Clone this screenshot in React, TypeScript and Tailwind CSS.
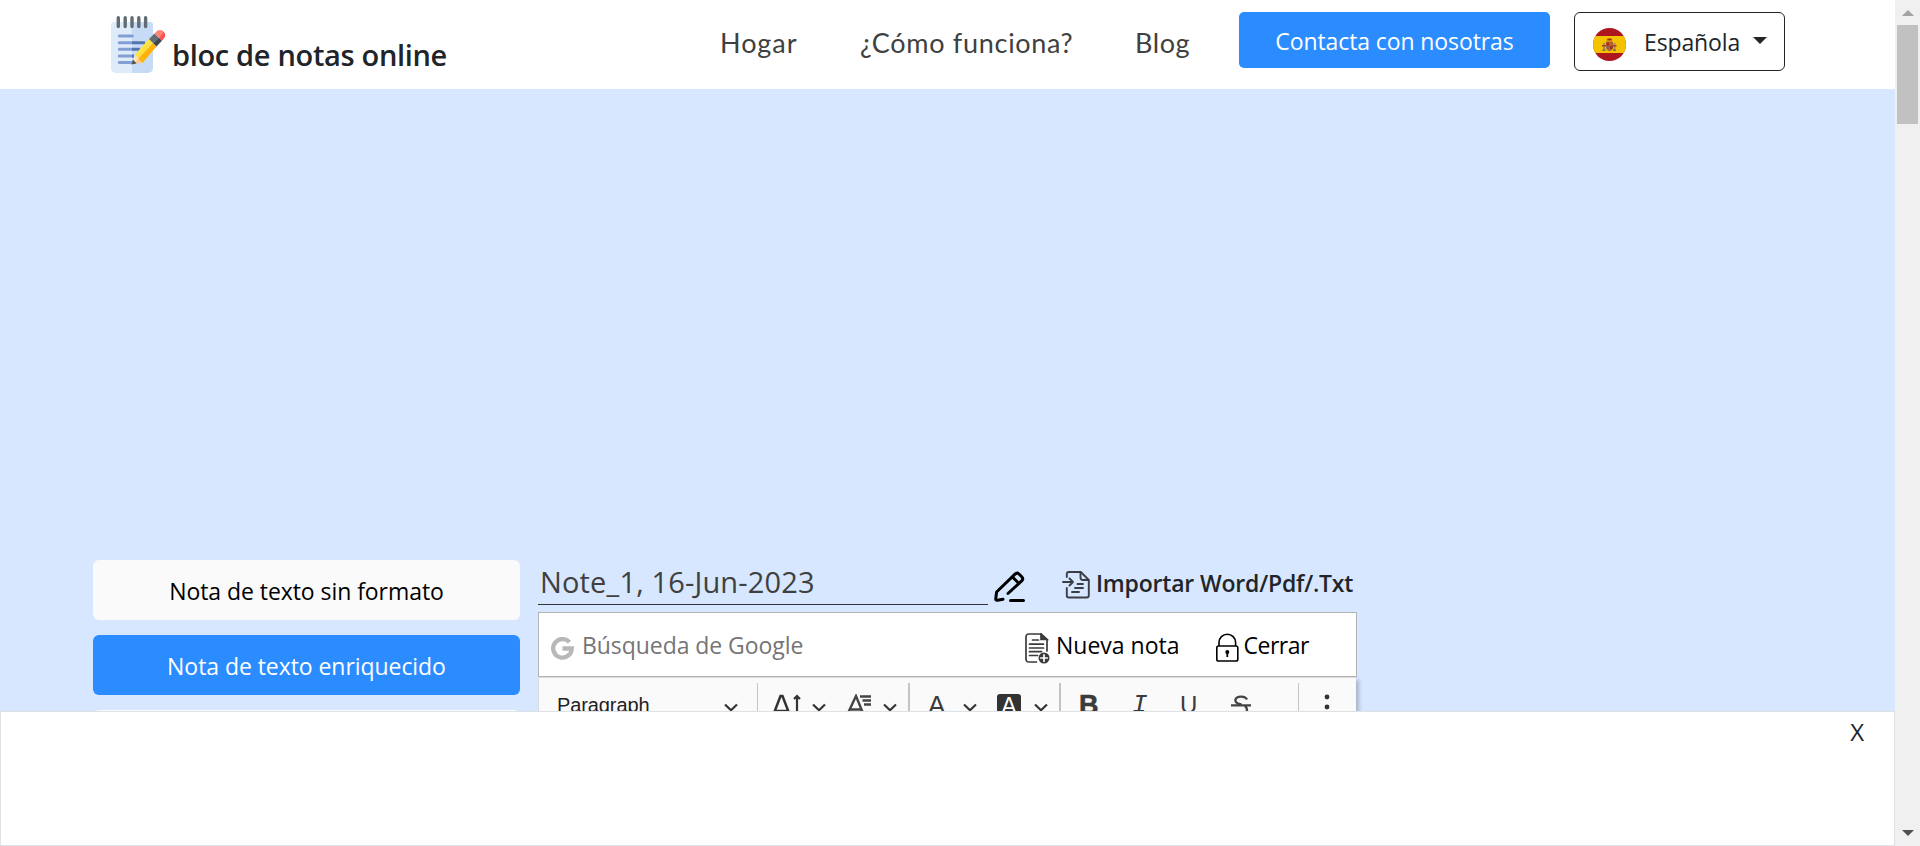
import type { ReactNode } from "react";

function NotepadLogo() {
  return (
    <svg className="mt-4 h-[57px] w-[55px] shrink-0" viewBox="0 0 55 57">
      <path d="M0 9a3 3 0 0 1 3-3h18v51H5a5 5 0 0 1-5-5z" fill="#deebf9" />
      <path d="M21 6h18a3 3 0 0 1 3 3v43a5 5 0 0 1-5 5H21z" fill="#c6dcf6" />
      <g stroke="#626d73" strokeWidth="3.4" strokeLinecap="round">
        <path d="M7.3 1.8v8.7M14.2 1.8v8.7M21 1.8v8.7M27.8 1.8v8.7M34.6 1.8v8.7" />
      </g>
      <g strokeWidth="3" strokeLinecap="round">
        <path d="M8.3 20h13M8.3 26.7H21M8.3 33.3H21M8.3 40H21M8.3 46.6H21" stroke="#829fd5" />
        <path d="M21 26.7h13M21 33.3h8M21 40h2" stroke="#5474ad" strokeLinecap="butt" />
      </g>
      <path d="M21.5 48.5 24 38.5l7 7.5z" fill="#ffe3b8" />
      <path d="m21.5 48.5 6-6 4 4z" fill="#ffc98e" />
      <path d="M20.5 48.5 22 43.5l3.5 4z" fill="#4b5760" />
      <path d="m24 38.5 14-15.5 4 4-14.5 15.5z" fill="#ffe13d" />
      <path d="m27.5 42.5 14.5-15.5 3.5 3.5L31.5 47z" fill="#ffb20a" />
      <path d="m38 23 5.5-5.5 4.5 4.3-6 5.2z" fill="#626d73" />
      <path d="m42 27 6-5.2 3 3-5.500 5.700z" fill="#3f484f" />
      <path d="m43.500 17.500 2-2a5 5 0 0 1 7 0L48 21.800z" fill="#ff8375" />
      <path d="M48 21.800l4.500-6.300a5 5 0 0 1 0 7.500L51 24.800z" fill="#ff5250" />
    </svg>
  );
}

function SpanishFlag() {
  return (
    <svg className="mt-[15px] size-[33px] shrink-0" viewBox="0 0 33 33">
      <clipPath id="disc">
        <circle cx="16.5" cy="16.5" r="16.5" />
      </clipPath>
      <g clipPath="url(#disc)">
        <path fill="#ac161c" d="M0 0h33v33H0z" />
        <path fill="#f3c300" d="M0 8h33v17H0z" />
        <path fill="#b08a4a" d="M10 15h2v8h-2zM20.5 15h2v8h-2z" />
        <path fill="#b5622b" d="M13 13.500h7V20q-1 3-3.500 3.500Q14 23 13 20z" />
        <path fill="#a92a1f" d="M13.500 14.500h2.500v3h-2.500zM17 18h2.500v3H17zM14.500 10.500h4l.5 2h-5z" />
        <path fill="#7c6a62" d="M13.500 18h2.500v3h-2.500zM9.500 21.500h3v1.500h-3zM20 21.500h3v1.500h-3z" />
        <path fill="#a5432d" d="M9 17h4v1.500H9zM19.500 17h4v1.500h-4z" />
      </g>
    </svg>
  );
}

function PencilIcon() {
  return (
    <svg className="mt-[11px] ml-[6px] h-[32px] w-[31px] shrink-0" viewBox="0 0 31 32" fill="none" stroke="#000" strokeWidth="3" strokeLinejoin="round" strokeLinecap="round">
      <path d="M9 28.300 3.500 29.300q-2 .3-1.700-1.800l.8-6.500L21 3.200q2-2 4-.2l2.700 2.700q2 2 .2 4L14 22.500M18.500 6l6.500 6.500" />
      <path d="M16.500 29.500h13" />
    </svg>
  );
}

function ImportIcon() {
  return (
    <svg className="mt-[11px] ml-[37px] h-[28px] w-[28px] shrink-0" viewBox="0 0 28 28" fill="none" stroke="#3a3f45" strokeWidth="1.9" strokeLinecap="round" strokeLinejoin="round">
      <path d="M4.800 6V3q0-2 2-2h12l8 8v15.500q0 2-2 2H6.800q-2 0-2-2V17" />
      <path d="M18.500 1.500v5q0 2.500 2.500 2.500h5.500M1 11h9.500M7.500 7.500 11 11l-3.500 3.500M15.500 13h5.500M13 17h8M10 21h7" />
    </svg>
  );
}

function NewNoteIcon() {
  return (
    <svg className="mt-[20px] h-[31px] w-[25px] shrink-0" viewBox="0 0 25 31" fill="none" stroke="#3b3b3b" strokeWidth="1.7" strokeLinecap="round">
      <path d="M11.500 29H4q-3 0-3-3V4q0-3 3-3h12l6 5.500V18" />
      <path d="M16 1v5.500h6z" fill="#3b3b3b" />
      <path d="M7.500 7h6M4.500 11.200h14M4.500 15h14M4.500 18.700h12M4.500 22.500h8" />
      <circle cx="19" cy="25" r="5.5" fill="#3b3b3b" stroke="none" />
      <path d="M19 21.800v6.400M15.800 25h6.400" stroke="#fff" />
    </svg>
  );
}

function LockIcon() {
  return (
    <svg className="mt-[20px] ml-[35px] h-[30px] w-[24px] shrink-0" viewBox="0 0 24 30" fill="none" stroke="#000" strokeWidth="1.6">
      <rect x="1.8" y="13" width="21" height="15" rx="1.8" />
      <path d="M4 13V9.500a8.300 8.300 0 0 1 16.600 0V13" />
      <circle cx="12.3" cy="19" r="2" fill="#000" stroke="none" />
      <path d="M12.300 19v5" strokeWidth="1.8" />
    </svg>
  );
}

function GoogleIcon() {
  return (
    <svg className="mt-[24px] ml-[12px] size-[23px] shrink-0" viewBox="0 0 23 23" fill="none" stroke="#b8b8b8" strokeWidth="4.3">
      <path d="M18.500 5.200A9.300 9.300 0 1 0 20.800 11.500H11.500" />
    </svg>
  );
}

function Tool({ className, children }: { className: string; children: ReactNode }) {
  return <div className={`flex h-[50px] shrink-0 items-start ${className}`}>{children}</div>;
}

function Chevron() {
  return (
    <svg className="mt-[25px] h-[9px] w-[14px] shrink-0" viewBox="0 0 14 9" fill="none" stroke="#333" strokeWidth="2.2">
      <path d="m1 1.500 6 5.700 6-5.700" />
    </svg>
  );
}

function Glyph({ className, children }: { className: string; children: ReactNode }) {
  return <span className={`block leading-[30px] text-[#3b3b3b] ${className}`}>{children}</span>;
}

function Toolbar() {
  return (
    <div className="mr-px flex h-[60px] border-t border-l border-[#dcdcdc] bg-[#fafafa] font-['Liberation_Sans',sans-serif] shadow-[3px_3px_4px_rgba(0,0,0,0.22)]">
      <Tool className="w-[218px] pl-[18px]">
        <span className="mt-[12px] w-[167px] shrink-0 text-[20px] leading-[30px] tracking-[-0.1px] text-[#222]">Paragraph</span>
        <Chevron />
      </Tool>
      <i className="mt-[5px] h-[60px] w-px bg-[#c4c4c4]" />
      <Tool className="w-[150px] pl-[15px]">
        <svg className="mt-[16px] h-[22px] w-[18px]" viewBox="0 0 18 22" fill="none" stroke="#333" strokeWidth="2.5">
          <path d="M1 19 7.500 2h2L16 19M2 17h14" />
        </svg>
        <svg className="mt-[16px] ml-[2px] h-[18px] w-[8px]" viewBox="0 0 8 18" fill="none" stroke="#333" strokeWidth="2.2">
          <path d="M4 2v16M1 5l3-3 3 3" />
        </svg>
        <i className="w-[11px]" />
        <Chevron />
        <svg className="mt-[16px] ml-[21px] h-[18px] w-[26px]" viewBox="0 0 26 18" fill="none" stroke="#444" strokeWidth="2.4">
          <path d="M1.500 18 9 2l6.500 16M3 15.500h12M13 2.500h11M15.500 6.500H24M17 10.500h7" />
        </svg>
        <i className="w-[10px]" />
        <Chevron />
      </Tool>
      <i className="mt-[5px] h-[60px] w-[2px] bg-[#c4c4c4]" />
      <Tool className="w-[149px] pl-[18px]">
        <Glyph className="mt-[12px] w-[35px] text-[26px]">A</Glyph>
        <Chevron />
        <span className="mt-[16px] ml-[20px] flex h-[24px] w-[24px] justify-center rounded-[3px] bg-[#333] text-[23px] leading-[25px] text-white">A</span>
        <i className="w-[13px]" />
        <Chevron />
      </Tool>
      <i className="mt-[5px] h-[60px] w-[2px] bg-[#c4c4c4]" />
      <Tool className="w-[237px] pl-[18px]">
        <Glyph className="mt-[12px] w-[53px] text-[27px] font-extrabold [-webkit-text-stroke:0.6px_#3b3b3b]">B</Glyph>
        <Glyph className="mt-[12px] w-[48px] font-['Liberation_Mono',monospace] text-[26px] italic">I</Glyph>
        <Glyph className="mt-[12px] w-[50px] text-[24px]">U</Glyph>
        <svg className="mt-[17px] h-[17px] w-[22px]" viewBox="0 0 22 17" fill="none" stroke="#444" strokeWidth="2.3">
          <path d="M17 4.500C15.500 1 7 .2 5.500 4.300q-1 4.200 6 5.200M1 10.300h20M15 11q3 2.500 1.500 6" />
        </svg>
      </Tool>
      <i className="mt-[5px] h-[60px] w-px bg-[#c4c4c4]" />
      <Tool className="w-[57px] pl-[25px]">
        <svg className="h-[33px] w-[6px]" viewBox="0 0 6 33" fill="#333">
          <circle cx="3" cy="19" r="2.4" />
          <circle cx="3" cy="29" r="2.4" />
        </svg>
      </Tool>
    </div>
  );
}

function Header() {
  return (
    <header className="flex h-[89px] shrink-0 items-start bg-white pl-[111px] whitespace-nowrap">
      <NotepadLogo />
      <span className="mt-[35px] ml-[6px] w-[548px] text-[29px] leading-[40px] font-semibold tracking-[-0.33px] text-[#212529]">bloc de notas online</span>
      <nav className="mt-[23px] flex font-['Lato',sans-serif] text-[27px] leading-[40px] text-[#404040]">
        <a className="w-[140px] tracking-[0.95px]">Hogar</a>
        <a className="w-[275px] tracking-[0.7px]">¿Cómo funciona?</a>
        <a className="w-[104px] tracking-[0.6px]">Blog</a>
      </nav>
      <button className="mt-[12px] h-[56px] w-[311px] rounded-[5px] bg-[#2a8cff] pt-[2px] text-[23px] tracking-[-0.1px] text-white">Contacta con nosotras</button>
      <button className="mt-[12px] ml-[24px] flex h-[59px] w-[211px] items-start rounded-[6px] border border-[#212529] pl-[18px] text-[#212529]">
        <SpanishFlag />
        <span className="mt-[9px] ml-[18px] w-[109px] text-left text-[23px] leading-[40px] tracking-[-0.13px]">Española</span>
        <svg className="mt-[24px] h-[7px] w-[14px] shrink-0" viewBox="0 0 14 7">
          <path d="M0 0h14L7 7z" fill="#212529" />
        </svg>
      </button>
    </header>
  );
}

function Scrollbar() {
  return (
    <aside className="flex h-full w-[25px] flex-col items-center bg-[#f0f0f0]">
      <svg className="mt-[10px] h-[6px] w-[12px] shrink-0" viewBox="0 0 12 6">
        <path d="M0 6h12L6 0z" fill="#a3a3a3" />
      </svg>
      <i className="mt-[9px] h-[99px] w-[21px] bg-[#c1c1c1]" />
      <svg className="mt-auto mb-[10px] h-[6px] w-[12px] shrink-0" viewBox="0 0 12 6">
        <path d="M0 0h12L6 6z" fill="#505050" />
      </svg>
    </aside>
  );
}

export default function App() {
  return (
    <div className="flex h-[846px] w-[1920px] overflow-hidden font-['Open_Sans','Noto_Sans',sans-serif]">
      <div className="flex w-[1895px] flex-col">
        <Header />
        <main className="flex h-[622px] shrink-0 items-start overflow-hidden bg-[#d6e7ff] pt-[471px] pl-[93px] whitespace-nowrap">
          <div className="flex w-[427px] shrink-0 flex-col gap-[15px] text-[23px] tracking-[-0.06px]">
            <button className="h-[60px] rounded-[6px] bg-[#fafafa] pt-[2px] text-black">Nota de texto sin formato</button>
            <button className="h-[60px] rounded-[6px] bg-[#2a8cff] pt-[2px] text-white">Nota de texto enriquecido</button>
            <button className="h-[60px] rounded-[6px] bg-[#fafafa]" />
          </div>
          <section className="ml-[18px] w-[819px] shrink-0">
            <div className="flex h-[52px] items-start">
              <div className="h-[45px] w-[450px] shrink-0 border-b border-[#333] pl-[2px] text-[29px] leading-[44px] tracking-[0.16px] text-[#404040]">Note_1, 16-Jun-2023</div>
              <PencilIcon />
              <ImportIcon />
              <span className="mt-[3px] ml-[6px] text-[23px] leading-[40px] font-semibold tracking-[-0.19px] text-[#212529]">Importar Word/Pdf/.Txt</span>
            </div>
            <div className="flex h-[65px] items-start border border-[#b3b3b3] bg-white text-[23px] leading-[40px] text-black">
              <GoogleIcon />
              <span className="mt-[12px] ml-[8px] w-[443px] tracking-[-0.06px] text-[#757575]">Búsqueda de Google</span>
              <NewNoteIcon />
              <span className="mt-[12px] ml-[6px]">Nueva nota</span>
              <LockIcon />
              <span className="mt-[12px] ml-[5px] tracking-[-0.5px]">Cerrar</span>
            </div>
            <Toolbar />
          </section>
        </main>
        <footer className="flex h-[135px] shrink-0 items-start justify-end border border-[#dee2e6] bg-white pr-[30px]">
          <span className="text-[24px] leading-[40px] text-[#212529]">X</span>
        </footer>
      </div>
      <Scrollbar />
    </div>
  );
}
